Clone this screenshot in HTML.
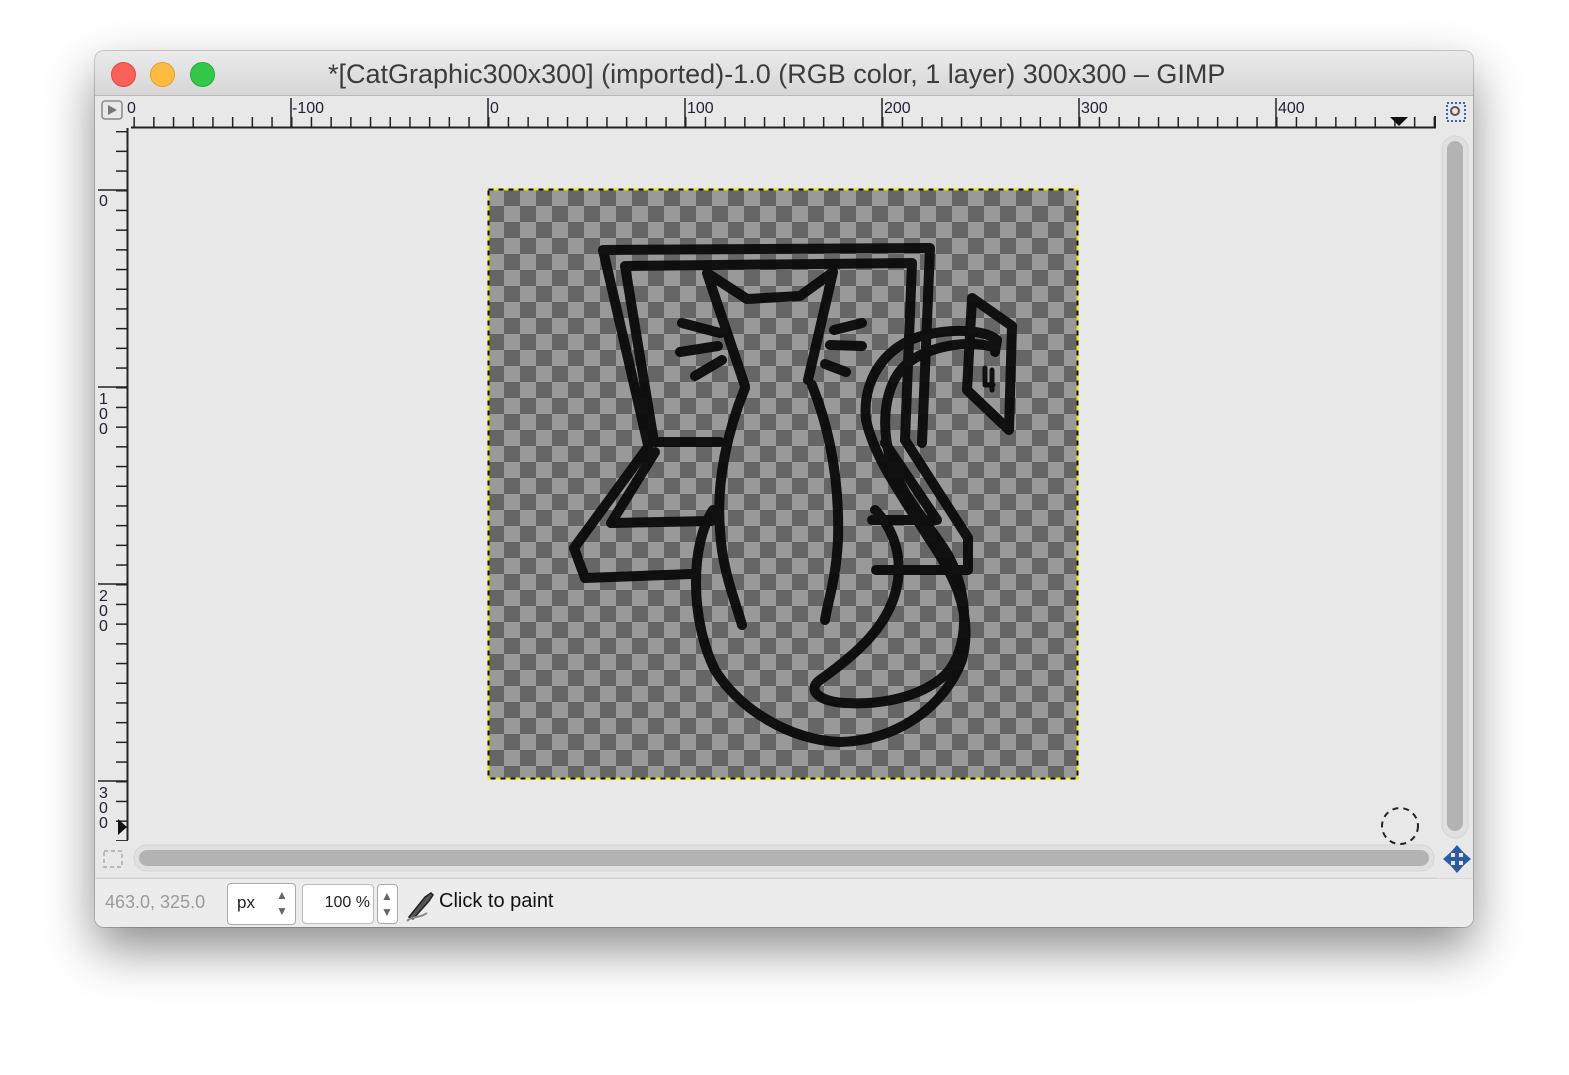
<!DOCTYPE html>
<html><head><meta charset="utf-8"><style>
html,body{margin:0;padding:0;width:1569px;height:1075px;background:#fff;overflow:hidden;font-family:"Liberation Sans",sans-serif}
#win{position:absolute;left:95px;top:51px;width:1378px;height:876px;border-radius:9px;background:#e8e8e8;box-shadow:0 22px 50px rgba(0,0,0,.45),0 0 0 1px rgba(0,0,0,.18);overflow:hidden}
#title{position:absolute;left:0;top:0;width:100%;height:44px;background:linear-gradient(#ebebeb,#d6d6d6);border-bottom:1px solid #b9b9b9}
#title .t{position:absolute;left:233px;top:8px;white-space:nowrap;font-size:27px;color:#3c3c3c}
.dot{position:absolute;top:11px;width:23px;height:23px;border-radius:50%}
svg{position:absolute;left:0;top:0}
#status{position:absolute;left:0;top:827px;width:100%;height:49px;border-top:1px solid #d8d8d8;background:#ececec}
.box{position:absolute;background:#fff;border:1px solid #aaa;border-radius:4px;box-sizing:border-box}
</style></head><body>
<div id="win">
<div id="title">
<div class="dot" style="left:16px;background:#fc605b;border:1px solid #de4a45"></div>
<div class="dot" style="left:55px;background:#fdbc40;border:1px solid #dea236"></div>
<div class="dot" style="left:95px;background:#34c84a;border:1px solid #27aa35"></div>
<div class="t">*[CatGraphic300x300] (imported)-1.0 (RGB color, 1 layer) 300x300 – GIMP</div>
</div>
<div id="status">
<div style="position:absolute;left:10px;top:13px;font-size:18px;color:#9a9a9a">463.0, 325.0</div>
<div class="box" style="left:132px;top:4px;width:69px;height:42px"><span style="position:absolute;left:9px;top:9px;font-size:17px;color:#222">px</span><span style="position:absolute;left:48px;top:3px;font-size:12px;color:#666;line-height:16px">▲<br>▼</span></div>
<div class="box" style="left:207px;top:5px;width:72px;height:40px;border-color:#bbb"><span style="position:absolute;right:3px;top:9px;font-size:16px;color:#222">100 %</span></div>
<div class="box" style="left:282px;top:5px;width:21px;height:40px"><span style="position:absolute;left:3px;top:3px;font-size:12px;color:#666;line-height:16px">▲<br>▼</span></div>
<svg width="34" height="34" style="left:308px;top:10px" viewBox="0 0 34 34"><path d="M6 28 L22 8 L28 4 L30 6 L26 12 L10 30 Z" fill="#555" stroke="#222" stroke-width="1.5"/><path d="M4 32 C10 26 16 30 24 24" stroke="#888" stroke-width="2" fill="none"/></svg>
<div style="position:absolute;left:344px;top:11px;font-size:20px;color:#111">Click to paint</div>
</div>
</div>
<svg width="1569" height="1075" viewBox="0 0 1569 1075">
<defs>
<pattern id="chk" x="488" y="190" width="32" height="32" patternUnits="userSpaceOnUse">
<rect width="32" height="32" fill="#666"/><rect width="16" height="16" fill="#999"/><rect x="16" y="16" width="16" height="16" fill="#999"/></pattern>
<pattern id="ht" x="488" y="0" width="19.7" height="1075" patternUnits="userSpaceOnUse"><line x1="0.75" y1="117" x2="0.75" y2="128" stroke="#222" stroke-width="1.5"/></pattern>
<pattern id="vt" x="0" y="190" width="1569" height="19.7" patternUnits="userSpaceOnUse"><line y1="0.75" x1="116" y2="0.75" x2="128" stroke="#222" stroke-width="1.5"/></pattern>
</defs>
<rect x="131" y="96" width="1305" height="32" fill="url(#ht)"/>
<line x1="131" y1="127.5" x2="1436" y2="127.5" stroke="#222" stroke-width="2"/>
<line x1="1435" y1="116" x2="1435" y2="128" stroke="#222" stroke-width="2"/>
<g stroke="#222" stroke-width="1.5"><line x1="291" y1="98" x2="291" y2="128"/><line x1="488" y1="98" x2="488" y2="128"/><line x1="685" y1="98" x2="685" y2="128"/><line x1="882" y1="98" x2="882" y2="128"/><line x1="1079" y1="98" x2="1079" y2="128"/><line x1="1276" y1="98" x2="1276" y2="128"/></g>
<g font-size="16" fill="#223" font-family="Liberation Sans"><text x="127" y="113">0</text><text x="292" y="113">-100</text><text x="490" y="113">0</text><text x="687" y="113">100</text><text x="884" y="113">200</text><text x="1081" y="113">300</text><text x="1278" y="113">400</text></g>
<path d="M1390 117 L1408 117 L1399 126Z" fill="#111"/>
<rect x="102" y="101" width="20" height="18" rx="3" fill="none" stroke="#888" stroke-width="1.5"/><path d="M108 105 L117 110 L108 115Z" fill="#777"/>
<rect x="1447" y="103" width="18" height="18" fill="none" stroke="#3a62b0" stroke-width="2" stroke-dasharray="2 2"/><circle cx="1455" cy="111" r="4" fill="none" stroke="#555" stroke-width="2"/>
<rect x="96" y="131" width="32" height="710" fill="url(#vt)"/>
<line x1="127.5" y1="128" x2="127.5" y2="840" stroke="#222" stroke-width="2"/>
<g stroke="#222" stroke-width="1.5"><line x1="98" y1="190" x2="128" y2="190"/><line x1="98" y1="387" x2="128" y2="387"/><line x1="98" y1="584" x2="128" y2="584"/><line x1="98" y1="781" x2="128" y2="781"/></g>
<g font-size="16" fill="#223" font-family="Liberation Sans"><text x="99" y="206">0</text><text x="99" y="404">1</text><text x="99" y="419">0</text><text x="99" y="434">0</text><text x="99" y="601">2</text><text x="99" y="616">0</text><text x="99" y="631">0</text><text x="99" y="798">3</text><text x="99" y="813">0</text><text x="99" y="828">0</text></g>
<path d="M118 819 L127 827 L118 835Z" fill="#111"/>
<rect x="1442" y="136" width="26" height="702" rx="13" fill="#e0e0e0" stroke="#d4d4d4"/>
<rect x="1447" y="141" width="16" height="690" rx="8" fill="#b3b3b3"/>
<rect x="134" y="845" width="1300" height="26" rx="13" fill="#e0e0e0" stroke="#d4d4d4"/>
<rect x="139" y="850" width="1290" height="16" rx="8" fill="#b3b3b3"/>
<line x1="96" y1="878" x2="1437" y2="878" stroke="#d0d0d0"/>
<rect x="104" y="851" width="18" height="16" fill="none" stroke="#aaa" stroke-width="1.5" stroke-dasharray="4 3"/>
<circle cx="1400" cy="826" r="18" fill="none" stroke="#222" stroke-width="2" stroke-dasharray="6 5"/>
<g fill="#2d5aa0"><path d="M1457 845 L1464 853 L1450 853Z"/><path d="M1457 873 L1464 865 L1450 865Z"/><path d="M1443 859 L1451 852 L1451 866Z"/><path d="M1471 859 L1463 852 L1463 866Z"/><rect x="1455" y="851" width="4" height="16"/><rect x="1449" y="857" width="16" height="4"/></g>
<rect x="488" y="190" width="590" height="589" fill="url(#chk)"/>
<rect x="488.5" y="189.5" width="589" height="589" fill="none" stroke="#ee0" stroke-width="2"/>
<rect x="488.5" y="189.5" width="589" height="589" fill="none" stroke="#111" stroke-width="2" stroke-dasharray="5 5"/>
<g fill="none" stroke="#0a0a0a" stroke-width="10" stroke-linejoin="round" stroke-linecap="round" opacity="0.95">
<path d="M603 250 L930 248 L922 443 M603 250 L648 445"/>
<path d="M625 266 L912 263 L905 440 M625 266 L654 442 L720 442"/>
<path d="M648 447 L574 548 L585 578 L692 574"/>
<path d="M655 452 L611 523 L712 521"/>
<path d="M885 443 L937 520 L872 520"/>
<path d="M905 440 L968 538 L968 570 L876 570"/>
<path d="M707 273 L747 299 L800 296 L833 272 L808 380 M707 273 L745 386"/>
<path d="M745 388 C728 430 716 480 720 530 C722 570 735 600 742 625"/>
<path d="M812 385 C826 420 840 470 838 540 C836 580 828 600 825 620"/>
<path d="M682 323 L720 333 M680 352 L718 346 M695 376 L722 360 M862 323 L834 330 M862 346 L830 345 M846 372 L825 364"/>
<path d="M713 510 C690 545 690 620 715 670 C740 710 790 740 840 742 C900 740 945 705 962 660 C975 610 950 570 928 537 C905 500 875 460 866 420 C862 380 885 345 925 335 C955 328 985 330 997 340 L995 352"/>
<path d="M993 347 C970 340 935 345 912 360 C885 378 880 420 890 458 C900 495 930 525 948 555 C970 595 970 650 945 675 C920 698 880 705 845 703 C820 702 806 690 820 680 C855 655 892 625 898 580 C902 550 890 525 875 510"/>
<path d="M972 298 L1012 326 L1009 430 L967 390 L972 298"/>
<path d="M985 368 L985 385 L993 385 M992 370 L992 390" stroke-width="5"/>
</g>
</svg>
</body></html>
